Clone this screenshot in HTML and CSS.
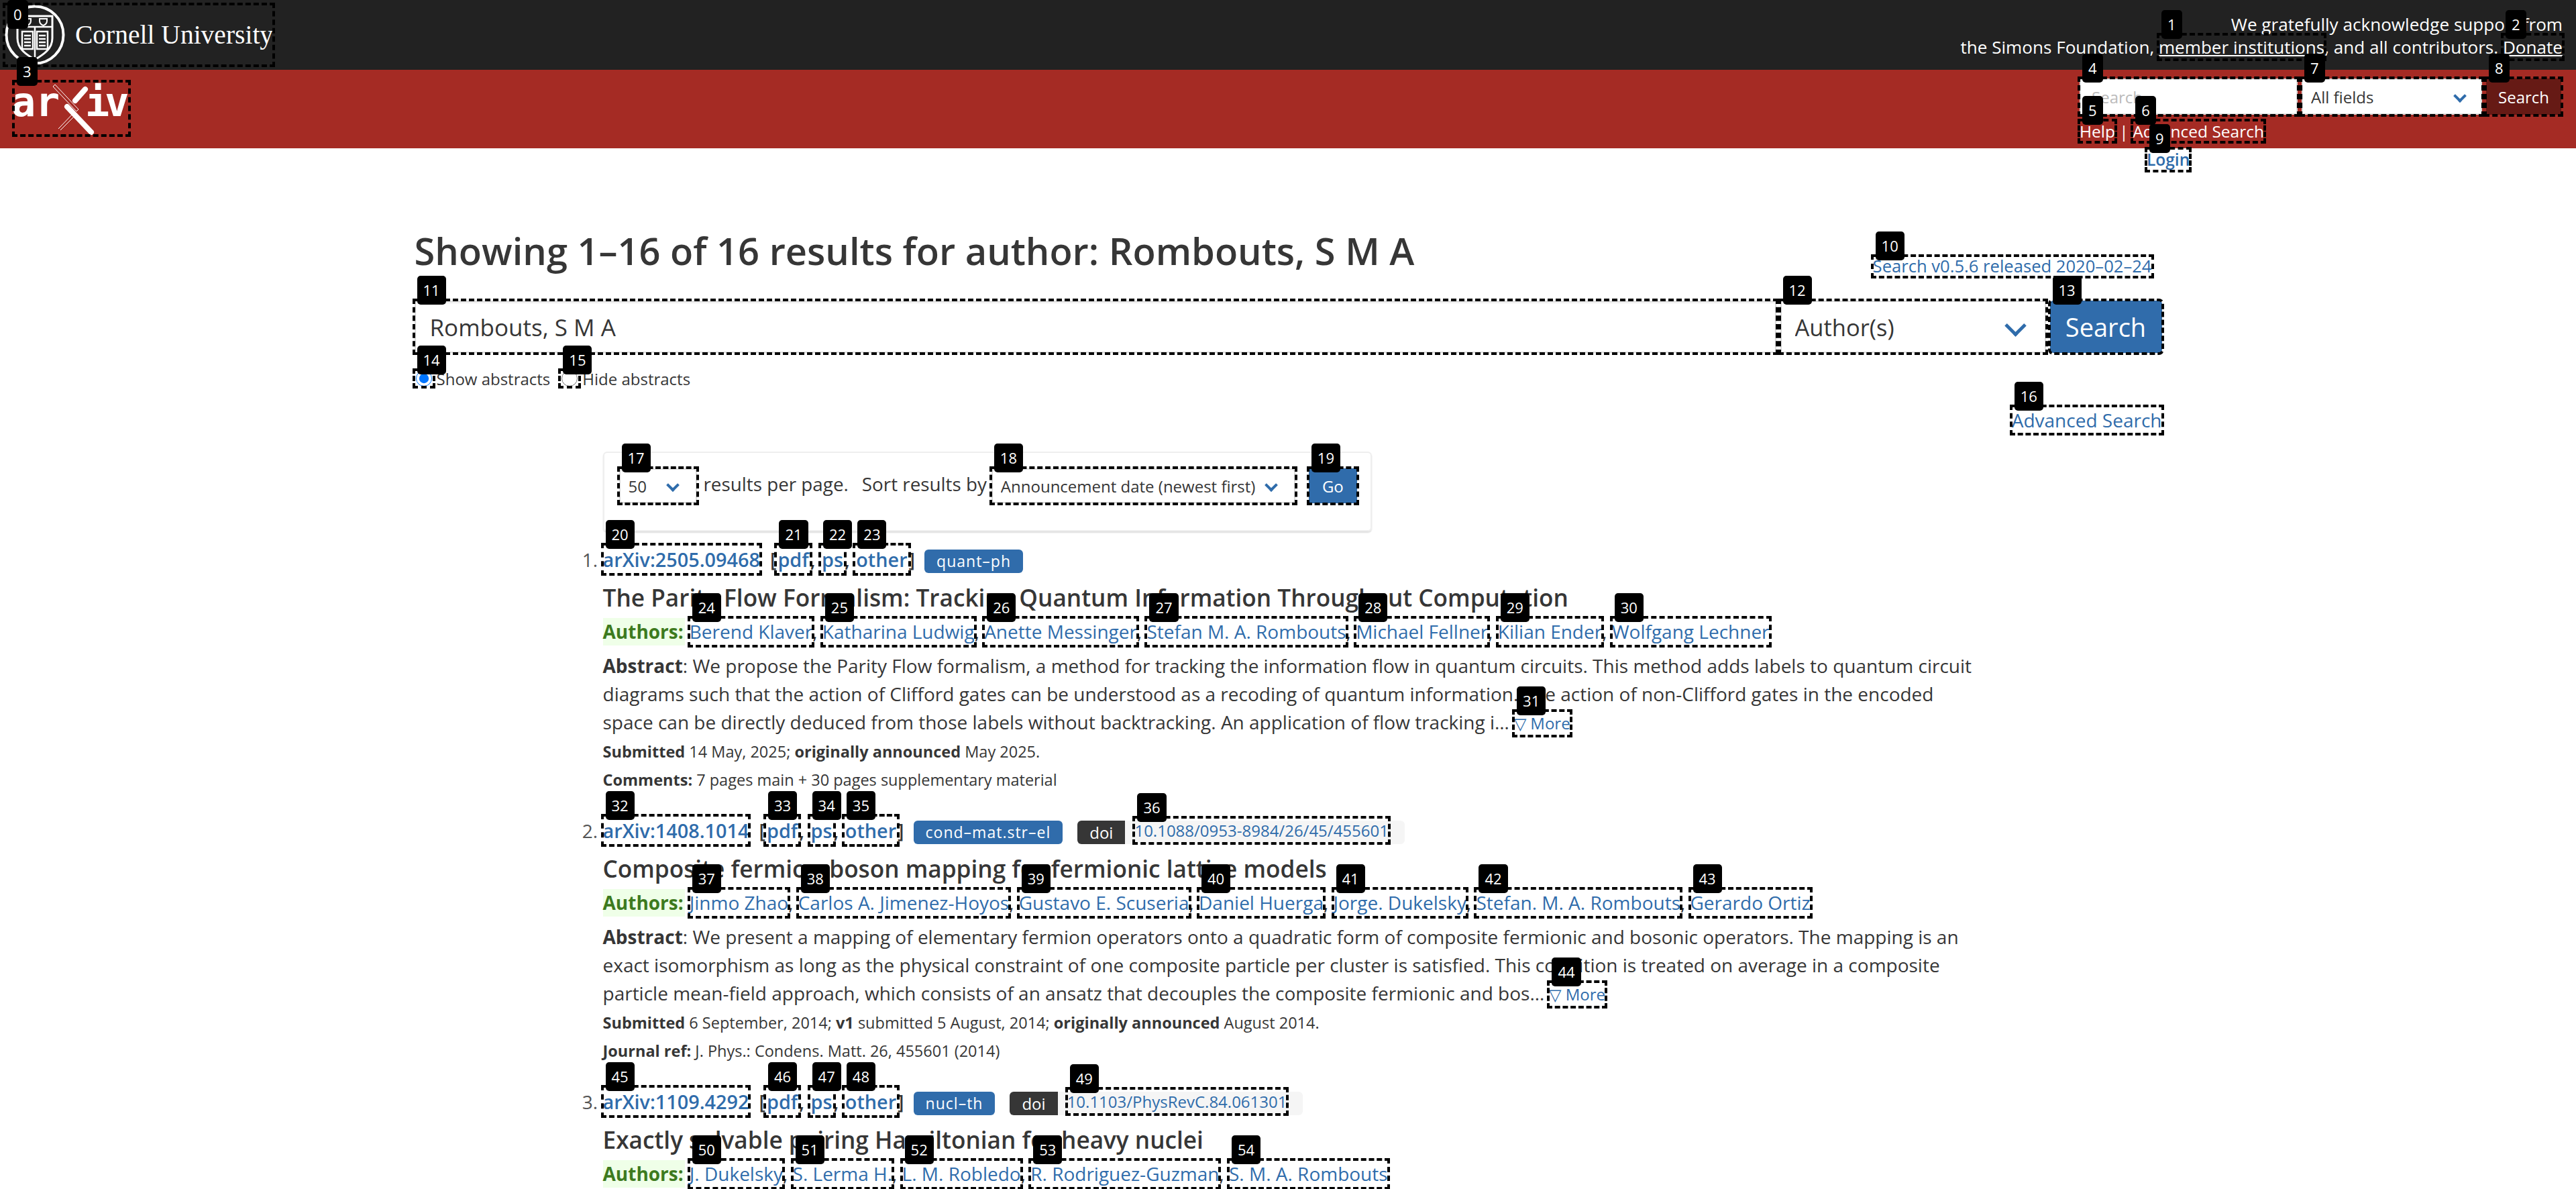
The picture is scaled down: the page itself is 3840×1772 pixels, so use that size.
FILE: index.html
```html
<!DOCTYPE html>
<html lang="en">
<head>
    <meta charset="UTF-8">
    <title>Search | arXiv e-print repository</title>
    <link rel="stylesheet" href="styles.css">
</head>
<body>
    <div class="top-bar">
        <a class="mk cornell" href="#"><span class="num num-top">0</span>
            <svg class="seal" viewBox="0 0 90 90" width="90" height="90">
                <circle cx="45" cy="45" r="42.5" fill="none" stroke="#fff" stroke-width="4"/>
                <path d="M19 17H71V50C71 66 58 74 45 82C32 74 19 66 19 50Z" fill="none" stroke="#fff" stroke-width="3"/>
                <path d="M19 33H71M45 33V86" stroke="#fff" stroke-width="2.5"/>
                <path d="M28 21h11v3c0 4-3 6-5.500 7c-2.500-1-5.500-3-5.500-7zM52 21h11v3c0 4-3 6-5.500 7c-2.500-1-5.500-3-5.500-7z" fill="none" stroke="#fff" stroke-width="2"/>
                <path d="M26 40H42V66H26ZM48 40H64V66H48Z" fill="none" stroke="#fff" stroke-width="2.500"/>
                <path d="M29 46H39M29 51H39M29 56H39M29 61H39M51 46H61M51 51H61M51 56H61M51 61H61" stroke="#fff" stroke-width="2.500"/>
            </svg>
            <span class="cornell-name">Cornell University</span>
        </a>
        <p class="support">We gratefully acknowledge support from<br>the Simons Foundation, <a class="mk" href="#"><span class="num">1</span>member institutions</a>, and all contributors. <a class="mk" href="#"><span class="num">2</span>Donate</a></p>
    </div>

    <div class="red-bar">
        <a class="mk arxiv-logo" href="#"><span class="num">3</span>
            <svg viewBox="0 0 171 79" width="171" height="79">
                <text class="logo-text" x="-4" y="51">ar</text>
                <text class="logo-text" x="106" y="51">i<tspan dx="-7">v</tspan></text>
                <path d="M79 37L115 75" stroke="#fff" stroke-width="8" stroke-linecap="round"/>
                <path d="M91 28L106 11" stroke="#fff" stroke-width="8" stroke-linecap="round"/>
                <path d="M61 4L96 41M58 7L93 44M61 4L58 7M96 41L93 44M88 47L66 70M91 50L69 72" stroke="#fff" stroke-width="1" fill="none"/>
            </svg>
        </a>
        <div class="quick">
            <form class="quick-form">
                <span class="mk quick-input"><span class="num">4</span><input type="text" placeholder="Search"></span>
                <span class="mk select-wrap quick-select"><span class="num">7</span><select><option>All fields</option></select></span>
                <button class="mk quick-btn" type="button"><span class="num">8</span>Search</button>
            </form>
            <div class="quick-links"><a class="mk" href="#"><span class="num">5</span>Help</a> | <a class="mk" href="#"><span class="num">6</span>Advanced Search</a></div>
            <div class="login-row"><a class="mk" href="#"><span class="num">9</span>Login</a></div>
        </div>
    </div>

    <main class="content">
        <div class="head-row">
            <h1>Showing 1–16 of 16 results for author: Rombouts, S M A</h1>
            <a class="mk release" href="#"><span class="num">10</span>Search v0.5.6 released 2020–02–24</a>
        </div>
        <form class="search-row">
            <span class="mk term"><span class="num">11</span><input type="text" value="Rombouts, S M A"></span>
            <span class="mk select-wrap field"><span class="num">12</span><select><option>Author(s)</option></select></span>
            <button class="mk go-big" type="button"><span class="num">13</span>Search</button>
        </form>
        <div class="radios">
            <span class="mk radio"><span class="num">14</span><input type="radio" name="abs" checked></span><label>Show abstracts</label>
            <span class="mk radio radio-2"><span class="num">15</span><input type="radio" name="abs"></span><label>Hide abstracts</label>
        </div>
        <div class="adv-row"><a class="mk" href="#"><span class="num">16</span>Advanced Search</a></div>

        <div class="results-col">
            <div class="sort-box">
                <span class="mk select-wrap per-page"><span class="num">17</span><select><option>50</option></select></span>
                <span class="sort-text">results per page.</span>
                <span class="sort-text sort-by">Sort results by</span>
                <span class="mk select-wrap sort-order"><span class="num">18</span><select><option>Announcement date (newest first)</option></select></span>
                <button class="mk go" type="button"><span class="num">19</span>Go</button>
            </div>

            <ol class="results">
                <li>
                    <div class="id-row">
                        <a class="mk arxiv-id" href="#"><span class="num">20</span>arXiv:2505.09468</a>
                        <span class="formats">[<a class="mk" href="#"><span class="num">21</span>pdf</a>, <a class="mk" href="#"><span class="num">22</span>ps</a>, <a class="mk" href="#"><span class="num">23</span>other</a>]</span>
                        <span class="tag">quant–ph</span>
                    </div>
                    <p class="title">The Parity Flow Formalism: Tracking Quantum Information Throughout Computation</p>
                    <p class="authors"><span class="authors-label">Authors:</span> <a class="mk" href="#"><span class="num">24</span>Berend Klaver</a>, <a class="mk" href="#"><span class="num">25</span>Katharina Ludwig</a>, <a class="mk" href="#"><span class="num">26</span>Anette Messinger</a>, <a class="mk" href="#"><span class="num">27</span>Stefan M. A. Rombouts</a>, <a class="mk" href="#"><span class="num">28</span>Michael Fellner</a>, <a class="mk" href="#"><span class="num">29</span>Kilian Ender</a>, <a class="mk" href="#"><span class="num">30</span>Wolfgang Lechner</a></p>
                    <p class="abstract"><b>Abstract</b>: We propose the Parity Flow formalism, a method for tracking the information flow in quantum circuits. This method adds labels to quantum circuit diagrams such that the action of Clifford gates can be understood as a recoding of quantum information. The action of non-Clifford gates in the encoded space can be directly deduced from those labels without backtracking. An application of flow tracking i&hellip; <a class="mk more" href="#"><span class="num">31</span>▽ More</a></p>
                    <p class="meta"><b>Submitted</b> 14 May, 2025; <b>originally announced</b> May 2025.</p>
                    <p class="meta"><b>Comments:</b> 7 pages main + 30 pages supplementary material</p>
                </li>
                <li>
                    <div class="id-row">
                        <a class="mk arxiv-id" href="#"><span class="num">32</span>arXiv:1408.1014</a>
                        <span class="formats">[<a class="mk" href="#"><span class="num">33</span>pdf</a>, <a class="mk" href="#"><span class="num">34</span>ps</a>, <a class="mk" href="#"><span class="num">35</span>other</a>]</span>
                        <span class="tag">cond–mat.str–el</span>
                        <span class="doi"><span class="doi-key">doi</span><span class="doi-val"><a class="mk" href="#"><span class="num">36</span>10.1088/0953-8984/26/45/455601</a></span></span>
                    </div>
                    <p class="title">Composite fermion-boson mapping for fermionic lattice models</p>
                    <p class="authors"><span class="authors-label">Authors:</span> <a class="mk" href="#"><span class="num">37</span>Jinmo Zhao</a>, <a class="mk" href="#"><span class="num">38</span>Carlos A. Jimenez-Hoyos</a>, <a class="mk" href="#"><span class="num">39</span>Gustavo E. Scuseria</a>, <a class="mk" href="#"><span class="num">40</span>Daniel Huerga</a>, <a class="mk" href="#"><span class="num">41</span>Jorge. Dukelsky</a>, <a class="mk" href="#"><span class="num">42</span>Stefan. M. A. Rombouts</a>, <a class="mk" href="#"><span class="num">43</span>Gerardo Ortiz</a></p>
                    <p class="abstract"><b>Abstract</b>: We present a mapping of elementary fermion operators onto a quadratic form of composite fermionic and bosonic operators. The mapping is an exact isomorphism as long as the physical constraint of one composite particle per cluster is satisfied. This condition is treated on average in a composite particle mean-field approach, which consists of an ansatz that decouples the composite fermionic and bos&hellip; <a class="mk more" href="#"><span class="num">44</span>▽ More</a></p>
                    <p class="meta"><b>Submitted</b> 6 September, 2014; <b>v1</b> submitted 5 August, 2014; <b>originally announced</b> August 2014.</p>
                    <p class="meta"><b>Journal ref:</b> J. Phys.: Condens. Matt. 26, 455601 (2014)</p>
                </li>
                <li>
                    <div class="id-row">
                        <a class="mk arxiv-id" href="#"><span class="num">45</span>arXiv:1109.4292</a>
                        <span class="formats">[<a class="mk" href="#"><span class="num">46</span>pdf</a>, <a class="mk" href="#"><span class="num">47</span>ps</a>, <a class="mk" href="#"><span class="num">48</span>other</a>]</span>
                        <span class="tag">nucl–th</span>
                        <span class="doi"><span class="doi-key">doi</span><span class="doi-val"><a class="mk" href="#"><span class="num">49</span>10.1103/PhysRevC.84.061301</a></span></span>
                    </div>
                    <p class="title">Exactly solvable pairing Hamiltonian for heavy nuclei</p>
                    <p class="authors"><span class="authors-label">Authors:</span> <a class="mk" href="#"><span class="num">50</span>J. Dukelsky</a>, <a class="mk" href="#"><span class="num">51</span>S. Lerma H.</a>, <a class="mk" href="#"><span class="num">52</span>L. M. Robledo</a>, <a class="mk" href="#"><span class="num">53</span>R. Rodriguez-Guzman</a>, <a class="mk" href="#"><span class="num">54</span>S. M. A. Rombouts</a></p>
                </li>
            </ol>
        </div>
    </main>
</body>
</html>
```

FILE: styles.css
```css
* {
    box-sizing: border-box;
}
html, body {
    margin: 0;
    height: 1772px;
    overflow: hidden;
}
body {
    font-family: "Open Sans", "Noto Sans", sans-serif;
    color: #363636;
    background: #fff;
}
a {
    color: #2f6cab;
    text-decoration: none;
}
p {
    margin: 0;
}

/* numbered dashed marks */
.mk {
    position: relative;
    outline: 4px dashed #000;
    outline-offset: -1px;
}
.num {
    position: absolute;
    top: -37px;
    left: 4px;
    z-index: 5;
    height: 43px;
    padding: 0 9px;
    background: #000;
    border-radius: 5px;
    color: #fff;
    font: 400 22px/43px "Open Sans", sans-serif;
    text-decoration: none;
}
.num-top {
    top: -7px;
}

/* top black bar */
.top-bar {
    height: 104px;
    padding: 7px 20px 0 7px;
    display: flex;
    justify-content: space-between;
    background: #222;
    color: #fff;
}
.cornell {
    width: 400px;
    height: 90px;
    display: flex;
    align-items: center;
    gap: 15px;
    color: #fff;
}
.seal {
    flex: none;
}
.cornell-name {
    font: 400 39.5px "Liberation Serif", serif;
    white-space: nowrap;
}
.support {
    padding-top: 12px;
    font-size: 26.100px;
    line-height: 34px;
    text-align: right;
}
.support a {
    color: #fff;
    text-decoration: underline;
}

/* red bar */
.red-bar {
    height: 117px;
    padding: 18px 22px 0 21px;
    display: flex;
    justify-content: space-between;
    background: #a52b24;
}
.arxiv-logo {
    display: block;
    width: 171px;
    height: 79px;
}
.arxiv-logo svg {
    display: block;
    overflow: visible;
}
.logo-text {
    font: 700 60px "DejaVu Sans Mono", monospace;
    fill: #fff;
}
.quick {
    width: 718px;
    margin-top: -5px;
    font-size: 24.500px;
}
.quick-form {
    height: 54px;
    display: flex;
    gap: 6px;
}
.quick-input {
    width: 325px;
}
.quick-input input {
    width: 100%;
    height: 54px;
    padding: 0 16px;
    border: 2px solid #ddd;
    font: 24px "Open Sans", sans-serif;
}
.quick-input input::placeholder {
    color: #bbb;
}
.quick-select {
    width: 269px;
}
.quick-btn {
    width: 112px;
    border: none;
    background: #661a15;
    color: #fff;
    font: 24px "Open Sans", sans-serif;
}
.quick-links {
    margin-top: 9px;
    line-height: 31px;
    color: #fff;
}
.quick-links a {
    color: #fff;
}
.quick-links .mk {
    display: inline-block;
}
.login-row {
    margin-top: 11px;
    padding-left: 100px;
    line-height: 32px;
    font-weight: 600;
}
.login-row a {
    display: inline-block;
}

/* custom selects */
.select-wrap {
    display: block;
}
.select-wrap select {
    width: 100%;
    height: 100%;
    padding: 0 12px;
    appearance: none;
    background: #fff;
    border: 2px solid #ddd;
    border-radius: 0;
    color: #363636;
    font-family: "Open Sans", sans-serif;
    font-size: 24px;
}
.select-wrap::after {
    content: "";
    position: absolute;
    top: 50%;
    right: 26px;
    width: 10px;
    height: 10px;
    margin-top: -8px;
    border-left: 4px solid #2f6cab;
    border-bottom: 4px solid #2f6cab;
    transform: rotate(-45deg);
}

/* main column */
.content {
    width: 2605px;
    margin: 0 auto;
}
.head-row {
    height: 227px;
    padding-top: 114px;
    display: flex;
    justify-content: space-between;
    align-items: flex-start;
}
h1 {
    margin: 0;
    font-size: 56px;
    font-weight: 600;
    line-height: 76px;
    color: #363636;
}
.release {
    margin: 47px 15px 0 0;
    font-size: 25.600px;
    line-height: 30px;
}
.search-row {
    height: 78px;
    display: flex;
    gap: 6px;
}
.term {
    flex: 1;
}
.term input {
    width: 100%;
    height: 100%;
    padding: 0 21px;
    border: 2px solid #ddd;
    box-shadow: inset 0 2px 2px #eee;
    color: #363636;
    font: 35px "Open Sans", sans-serif;
}
.field {
    width: 396px;
}
.field select {
    padding: 0 20px;
    font-size: 34.500px;
}
.field::after {
    right: 34px;
    width: 18px;
    height: 18px;
    margin-top: -13px;
    border-width: 5px;
}
.go-big {
    width: 167px;
    border: none;
    border-radius: 5px;
    background: #306cab;
    color: #fff;
    font: 38px "Open Sans", sans-serif;
}
.radios {
    height: 24px;
    margin-top: 26px;
    display: flex;
    align-items: center;
    font-size: 24px;
}
.radio {
    display: block;
    width: 28px;
    height: 24px;
    margin-right: 5px;
}
.radio-2 {
    margin-left: 15px;
}
.radio input {
    display: block;
    width: 24px;
    height: 24px;
    margin: 0 2px;
}
.adv-row {
    margin-top: 30px;
    text-align: right;
    font-size: 28px;
    line-height: 40px;
}
.adv-row a {
    display: inline-block;
}

/* results */
.results-col {
    width: 2045px;
    margin: 27px 0 0 281px;
}
.sort-box {
    width: 1146px;
    height: 119px;
    padding: 23px 0 0 22px;
    display: flex;
    align-items: flex-start;
    border: 2px solid #eee;
    border-radius: 6px;
    box-shadow: 0 2px 2px #ddd;
}
.sort-text {
    margin-left: 10px;
    font-size: 27.800px;
    line-height: 46px;
    white-space: nowrap;
}
.sort-by {
    margin-left: 20px;
}
.per-page {
    width: 116px;
    height: 52px;
}
.sort-order {
    width: 453px;
    height: 52px;
    margin-left: 7px;
}
.per-page select, .sort-order select {
    border-radius: 6px;
    font-size: 24px;
}
.per-page::after, .sort-order::after {
    right: 29px;
}
.go {
    width: 72px;
    height: 52px;
    margin-left: 20px;
    border: none;
    background: #306cab;
    color: #fff;
    font: 24px "Open Sans", sans-serif;
}
.results {
    margin: 20px 0 0;
    padding: 0;
    font-size: 28px;
    color: #555;
}
.results li {
    margin-bottom: 35px;
}
.id-row {
    height: 43px;
    display: flex;
    align-items: flex-start;
    line-height: 43px;
}
.arxiv-id {
    font-size: 28.800px;
    font-weight: 600;
}
.formats {
    margin-left: 15px;
    font-size: 28.800px;
    font-weight: 600;
    color: #363636;
}
.formats .mk {
    display: inline-block;
    padding: 0 2px;
}
.tag {
    height: 35px;
    margin: 7px 0 0 14px;
    padding: 0 18px;
    background: #306cab;
    border-radius: 6px;
    color: #fff;
    font-size: 23px;
    letter-spacing: 1px;
    line-height: 35px;
}
.doi {
    height: 35px;
    margin: 7px 0 0 22px;
    display: flex;
    font-size: 24px;
    line-height: 35px;
}
.doi-key {
    padding: 0 18px;
    background: #363636;
    border-radius: 6px 0 0 6px;
    color: #fff;
}
.doi-val {
    padding: 0 24px 0 14px;
    background: #f5f5f5;
    border-radius: 0 6px 6px 0;
}
.doi-val .mk {
    display: inline-block;
    line-height: 37px;
    margin-top: -4px;
    vertical-align: top;
}
.title {
    margin-top: 11px;
    font-size: 35.200px;
    font-weight: 600;
    line-height: 48px;
    color: #363636;
}
.authors {
    margin-top: 7px;
    font-size: 28px;
    line-height: 41px;
    color: #363636;
}
.authors .mk {
    display: inline-block;
}
.authors-label {
    display: inline-block;
    width: 122px;
    background: #efffe8;
    color: #3d7a1e;
    font-weight: 700;
}
.abstract {
    margin-top: 9px;
    font-size: 28px;
    line-height: 42px;
    color: #363636;
}
.more {
    display: inline-block;
    font-size: 24px;
    line-height: 36px;
}
.meta {
    margin-top: 4px;
    font-size: 23.500px;
    line-height: 38px;
    color: #363636;
}
```
